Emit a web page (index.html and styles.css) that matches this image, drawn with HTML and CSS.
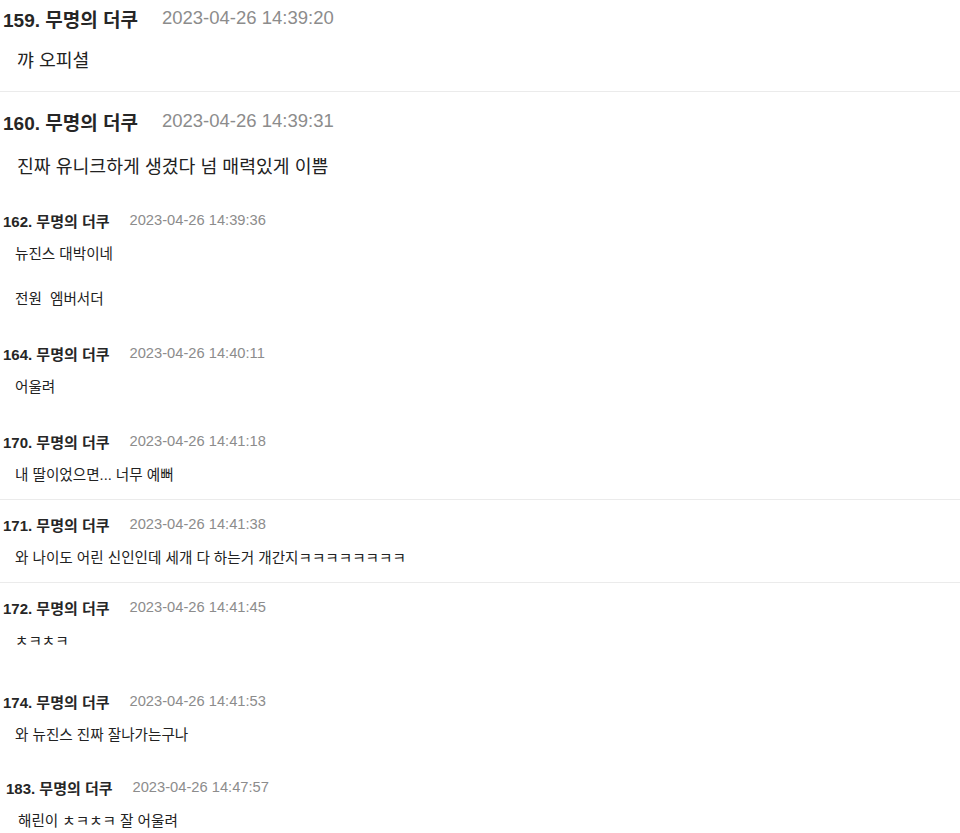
FILE: index.html
```html
<!DOCTYPE html>
<html lang="ko">
<head>
    <meta charset="UTF-8">
    <meta name="viewport" content="width=device-width, initial-scale=1.0">
    <title>댓글</title>
    <link rel="stylesheet" href="styles.css">
</head>
<body>
    <div class="comments">
        <div class="cmt lg sep first">
            <div class="cmt-head"><span class="cmt-name">159. 무명의 더쿠</span><span class="cmt-date">2023-04-26 14:39:20</span></div>
            <p class="cmt-body">꺄 오피셜</p>
        </div>
        <div class="cmt lg">
            <div class="cmt-head"><span class="cmt-name">160. 무명의 더쿠</span><span class="cmt-date">2023-04-26 14:39:31</span></div>
            <p class="cmt-body">진짜 유니크하게 생겼다 넘 매력있게 이쁨</p>
        </div>
        <div class="cmt">
            <div class="cmt-head"><span class="cmt-name">162. 무명의 더쿠</span><span class="cmt-date">2023-04-26 14:39:36</span></div>
            <p class="cmt-body">뉴진스 대박이네</p>
            <p class="cmt-body para">전원&nbsp; 엠버서더</p>
        </div>
        <div class="cmt">
            <div class="cmt-head"><span class="cmt-name">164. 무명의 더쿠</span><span class="cmt-date">2023-04-26 14:40:11</span></div>
            <p class="cmt-body">어울려</p>
        </div>
        <div class="cmt sep">
            <div class="cmt-head"><span class="cmt-name">170. 무명의 더쿠</span><span class="cmt-date">2023-04-26 14:41:18</span></div>
            <p class="cmt-body">내 딸이었으면... 너무 예뻐</p>
        </div>
        <div class="cmt sep">
            <div class="cmt-head"><span class="cmt-name">171. 무명의 더쿠</span><span class="cmt-date">2023-04-26 14:41:38</span></div>
            <p class="cmt-body">와 나이도 어린 신인인데 세개 다 하는거 개간지ㅋㅋㅋㅋㅋㅋㅋㅋ</p>
        </div>
        <div class="cmt tall">
            <div class="cmt-head"><span class="cmt-name">172. 무명의 더쿠</span><span class="cmt-date">2023-04-26 14:41:45</span></div>
            <p class="cmt-body">ㅊㅋㅊㅋ</p>
        </div>
        <div class="cmt short">
            <div class="cmt-head"><span class="cmt-name">174. 무명의 더쿠</span><span class="cmt-date">2023-04-26 14:41:53</span></div>
            <p class="cmt-body">와 뉴진스 진짜 잘나가는구나</p>
        </div>
        <div class="cmt shifted">
            <div class="cmt-head"><span class="cmt-name">183. 무명의 더쿠</span><span class="cmt-date">2023-04-26 14:47:57</span></div>
            <p class="cmt-body">해린이 ㅊㅋㅊㅋ 잘 어울려</p>
        </div>
    </div>
</body>
</html>
```

FILE: styles.css
```css
body {
    margin: 0;
    background-color: #ffffff;
    color: #222222;
    font-family: "Liberation Sans", "Noto Sans CJK KR", sans-serif;
}
.cmt {
    padding: 12px 0 18px 3px;
}
.cmt.sep {
    padding-bottom: 12px;
    border-bottom: 1px solid #ebebeb;
}
.cmt.tall {
    padding-bottom: 24px;
}
.cmt.short {
    padding-bottom: 16px;
}
.cmt-head {
    display: flex;
    align-items: center;
    gap: 20px;
    height: 24px;
}
.cmt-name {
    font-size: 15px;
    font-weight: bold;
    color: #262626;
}
.cmt-date {
    font-size: 14.7px;
    color: #8c8c8c;
}
.cmt-body {
    margin: 10px 0 0;
    padding-left: 12px;
    font-size: 14.6px;
    line-height: 24px;
}
.cmt-body.para {
    margin-top: 21px;
}
.cmt.shifted {
    padding-left: 6px;
}

/* 큰 글씨 댓글 */
.cmt.lg {
    padding: 15px 0 15px 3px;
}
.cmt.lg.sep {
    padding-bottom: 16px;
}
.cmt.lg.first {
    padding-top: 4px;
}
.cmt.lg .cmt-head {
    height: 28px;
    gap: 24px;
}
.cmt.lg .cmt-name {
    font-size: 19px;
}
.cmt.lg .cmt-date {
    font-size: 18.5px;
}
.cmt.lg .cmt-body {
    margin-top: 15px;
    padding-left: 14px;
    font-size: 18.3px;
    line-height: 28px;
}
.cmt.lg:not(.sep) .cmt-body {
    margin-top: 18px;
}
```
